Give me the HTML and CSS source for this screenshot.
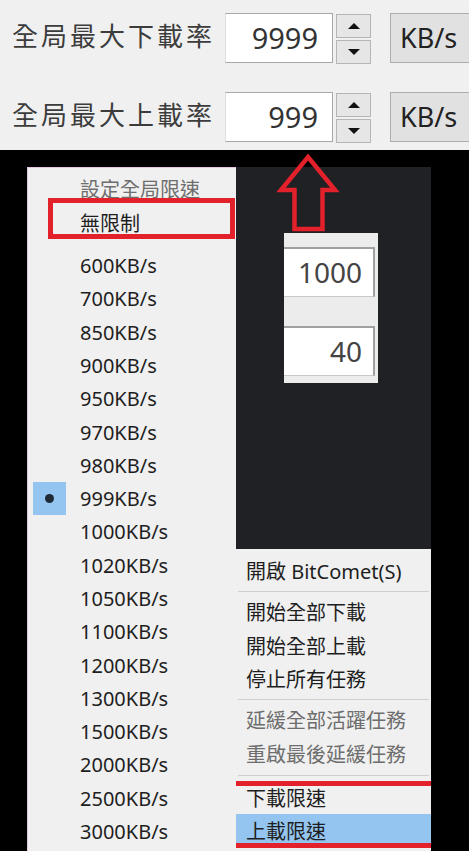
FILE: index.html
```html
<!DOCTYPE html>
<html lang="zh-Hant">
<head>
<meta charset="utf-8">
<title>BitComet 限速</title>
<link rel="stylesheet" href="styles.css">
</head>
<body>
<div class="page">
  <section class="settings">
    <div class="row">
      <span class="label">全局最大下載率</span>
      <div class="field">9999</div>
      <div class="spin"><div class="spin-btn up"></div><div class="spin-btn down"></div></div>
      <div class="unit">KB/s</div>
    </div>
    <div class="row">
      <span class="label">全局最大上載率</span>
      <div class="field">999</div>
      <div class="spin"><div class="spin-btn up"></div><div class="spin-btn down"></div></div>
      <div class="unit">KB/s</div>
    </div>
  </section>

  <section class="stage">
    <div class="speed-menu">
      <div class="mi head"><span class="chk"></span>設定全局限速</div>
      <div class="mi"><span class="chk"></span>無限制</div>
      <div class="gap"></div>
      <div class="mi"><span class="chk"></span>600KB/s</div>
      <div class="mi"><span class="chk"></span>700KB/s</div>
      <div class="mi"><span class="chk"></span>850KB/s</div>
      <div class="mi"><span class="chk"></span>900KB/s</div>
      <div class="mi"><span class="chk"></span>950KB/s</div>
      <div class="mi"><span class="chk"></span>970KB/s</div>
      <div class="mi"><span class="chk"></span>980KB/s</div>
      <div class="mi"><span class="chk on"></span>999KB/s</div>
      <div class="mi"><span class="chk"></span>1000KB/s</div>
      <div class="mi"><span class="chk"></span>1020KB/s</div>
      <div class="mi"><span class="chk"></span>1050KB/s</div>
      <div class="mi"><span class="chk"></span>1100KB/s</div>
      <div class="mi"><span class="chk"></span>1200KB/s</div>
      <div class="mi"><span class="chk"></span>1300KB/s</div>
      <div class="mi"><span class="chk"></span>1500KB/s</div>
      <div class="mi"><span class="chk"></span>2000KB/s</div>
      <div class="mi"><span class="chk"></span>2500KB/s</div>
      <div class="mi"><span class="chk"></span>3000KB/s</div>
    </div>

    <div class="right">
      <div class="dark">
        <div class="inset">
          <div class="ifield">1000</div>
          <div class="ifield">40</div>
        </div>
      </div>
      <div class="tray">
        <div class="ti">開啟 BitComet(S)</div>
        <div class="sep"></div>
        <div class="ti">開始全部下載</div>
        <div class="ti">開始全部上載</div>
        <div class="ti">停止所有任務</div>
        <div class="sep"></div>
        <div class="ti dis">延緩全部活躍任務</div>
        <div class="ti dis">重啟最後延緩任務</div>
        <div class="sep sep-wide"></div>
        <div class="ti">下載限速</div>
        <div class="ti hl">上載限速</div>
      </div>
    </div>

    <svg class="arrow" width="64" height="84" viewBox="0 0 64 84">
      <polygon points="32,7 59,40 46.5,40 46.5,79 18.5,79 18.5,40 5,40" fill="none" stroke="#e2212b" stroke-width="4.5" stroke-linejoin="miter"/>
    </svg>
    <div class="mark-box"></div>
    <div class="bar bar-top"></div>
    <div class="bar bar-bottom"></div>
  </section>
</div>
</body>
</html>
```

FILE: styles.css
```css
* { box-sizing: border-box; }
html, body { margin: 0; padding: 0; }
body {
  background: #000;
  font-family: "Noto Sans", "Noto Sans CJK TC", sans-serif;
}
.page {
  position: relative;
  width: 469px;
  height: 851px;
  overflow: hidden;
  background: #000;
}

/* top settings panel */
.settings {
  height: 150px;
  background: #f0f0f0;
  padding-top: 13px;
  display: flex;
  flex-direction: column;
  gap: 29px;
}
.row {
  display: flex;
  align-items: flex-start;
  height: 50px;
  padding-left: 12px;
}
.label {
  flex: none;
  width: 213px;
  height: 50px;
  line-height: 44px;
  font-size: 26px;
  letter-spacing: 3px;
  color: #3c3c3c;
  font-family: "Noto Sans CJK TC", sans-serif;
}
.field {
  flex: none;
  width: 108px;
  height: 50px;
  background: #fff;
  border: 1px solid #a8a8a8;
  border-left-color: #dedede;
  text-align: right;
  padding-right: 14px;
  font-size: 29px;
  line-height: 47px;
  color: #333;
}
.spin {
  flex: none;
  margin-left: 3px;
  width: 35px;
  display: flex;
  flex-direction: column;
  gap: 2px;
  padding-top: 1px;
}
.spin-btn {
  height: 24px;
  background: #e6e6e6;
  border: 1px solid #b5b5b5;
  display: flex;
  align-items: center;
  justify-content: center;
}
.spin-btn::after {
  content: "";
  border-left: 6px solid transparent;
  border-right: 6px solid transparent;
}
.up::after { border-bottom: 6px solid #111; }
.down::after { border-top: 6px solid #111; }
.unit {
  flex: none;
  margin-left: 19px;
  width: 90px;
  height: 50px;
  background: #e1e1e1;
  border: 1px solid #adadad;
  padding-left: 9px;
  font-size: 27px;
  line-height: 47px;
  color: #222;
}

/* lower composite */
.stage {
  position: relative;
  height: 701px;
  display: flex;
  align-items: flex-start;
  padding: 17px 0 0 27px;
}
.speed-menu {
  flex: none;
  width: 209px;
  height: 684px;
  background: #f0f0f0;
  border-left: 1px solid #e2c6e2;
  border-top: 1px solid #e2c6e2;
  padding-top: 4.3px;
}
.mi {
  height: 33.3px;
  display: flex;
  align-items: center;
  padding-left: 5px;
  font-size: 20px;
  color: #1e1e1e;
  white-space: nowrap;
}
.mi.head { color: #6e6e6e; }
.chk {
  flex: none;
  width: 33px;
  height: 33px;
  margin-right: 14px;
  display: flex;
  align-items: center;
  justify-content: center;
}
.chk.on { background: #93c5f0; }
.chk.on::after {
  content: "";
  width: 9px;
  height: 9px;
  border-radius: 50%;
  background: #1f2a36;
}
.gap { height: 10px; }

.right {
  flex: none;
  width: 195px;
  display: flex;
  flex-direction: column;
}
.dark {
  height: 382px;
  background: #1f2125;
  padding: 66px 0 0 48px;
}
.inset {
  width: 94px;
  height: 150px;
  background: #ececec;
  padding-top: 14px;
}
.ifield {
  width: 91px;
  height: 50px;
  background: #fff;
  border-top: 2px solid #a0a0a0;
  border-right: 2px solid #a0a0a0;
  border-bottom: 1px solid #c8c8c8;
  text-align: right;
  padding-right: 11px;
  font-size: 28px;
  line-height: 46px;
  color: #444;
}
.ifield + .ifield { margin-top: 29px; }

.tray {
  height: 302px;
  background: #f0f0f0;
  padding-top: 5px;
}
.ti {
  height: 33.3px;
  padding-left: 10px;
  display: flex;
  align-items: center;
  font-size: 20px;
  color: #1e1e1e;
  white-space: nowrap;
}
.ti.dis { color: #6d6d6d; }
.ti.hl { background: #93c5f0; }
.sep {
  height: 8px;
  display: flex;
  align-items: center;
  padding: 0 2px;
}
.sep-wide { height: 11px; }
.sep::after {
  content: "";
  flex: 1;
  height: 1px;
  background: #cfcfcf;
}

/* annotations */
.arrow {
  position: absolute;
  left: 276px;
  top: 0;
}
.mark-box {
  position: absolute;
  left: 48px;
  top: 48px;
  width: 187px;
  height: 41px;
  border: 5px solid #e2212b;
}
.bar {
  position: absolute;
  left: 236px;
  width: 195px;
  height: 5px;
  background: #e2212b;
}
.bar-top { top: 631px; }
.bar-bottom { top: 693px; }
```
